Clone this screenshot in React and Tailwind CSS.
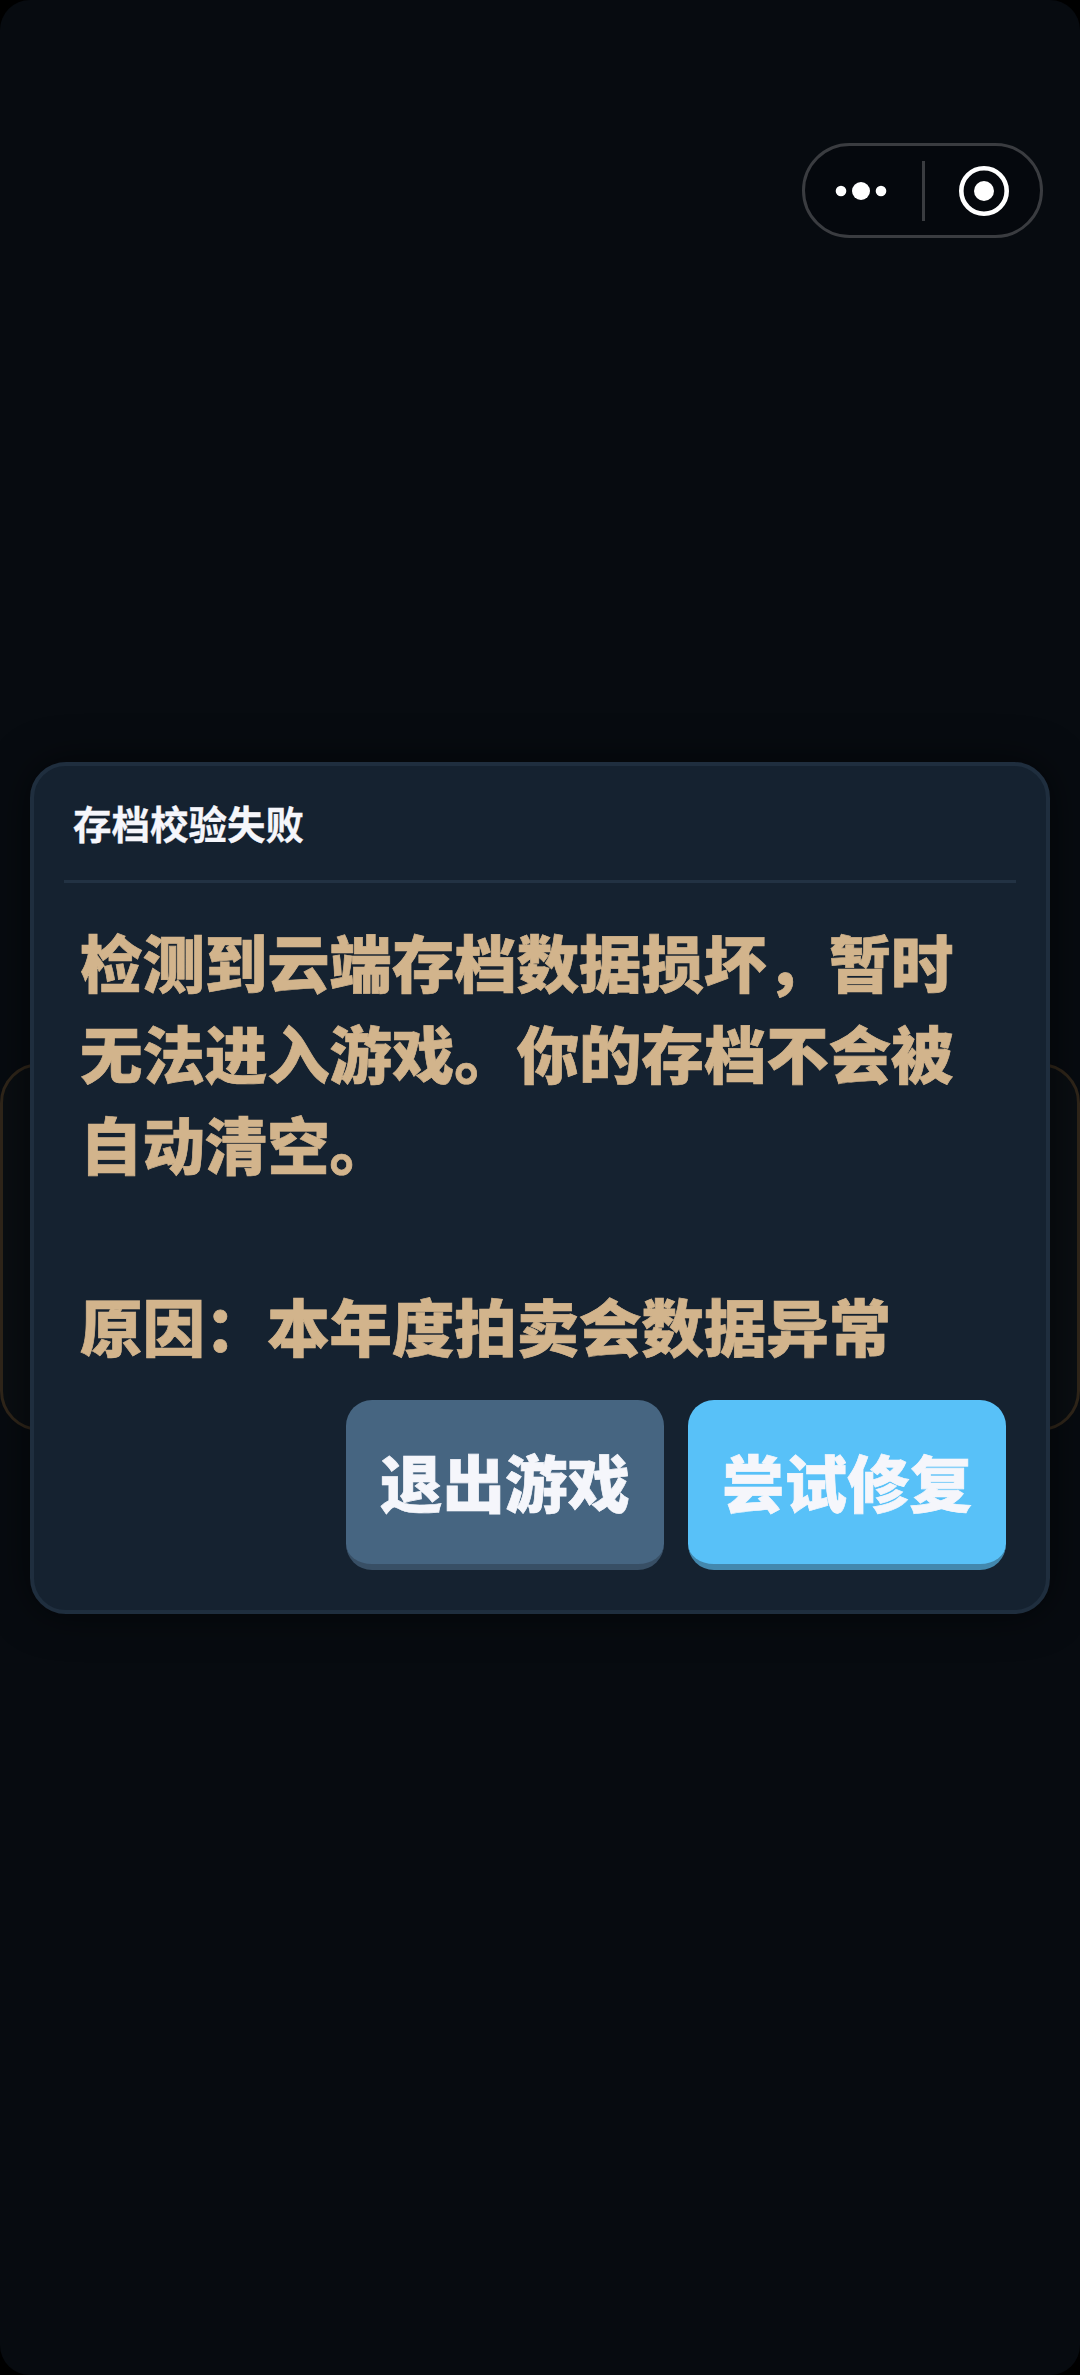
import React from 'react';

const cjk = "font-['Noto_Sans_CJK_SC','Noto_Sans',sans-serif]";

function CapsuleMenu() {
  return (
    <div className="flex items-center w-[241px] h-[95px] rounded-full border-[3px] border-[#3a3c40] bg-[#05080d]">
      <div className="flex items-center justify-center w-[117px] h-full pr-[5px]">
        <svg width="60" height="20" viewBox="0 0 60 20" fill="#fff">
          <circle cx="10" cy="10" r="5.3" />
          <circle cx="30" cy="10" r="9" />
          <circle cx="50" cy="10" r="5.3" />
        </svg>
      </div>
      <div className="w-[3px] h-[60px] bg-[#3a3c40]" />
      <div className="flex items-center justify-center flex-1 h-full pl-[3px]">
        <svg width="52" height="52" viewBox="0 0 52 52" fill="none">
          <circle cx="26" cy="26" r="22.7" stroke="#fff" strokeWidth="4.6" />
          <circle cx="26" cy="26" r="10" fill="#fff" />
        </svg>
      </div>
    </div>
  );
}

function DialogButton({ label, className }) {
  return (
    <button className={`flex items-center justify-center w-[318px] h-[170px] rounded-[26px] border-b-[6px] text-[62.5px] leading-none font-black text-[#f5f6fb] [-webkit-text-stroke:0.7px_#f5f6fb] ${className}`}>
      {label}
    </button>
  );
}

export default function App() {
  return (
    <div className="bg-black w-[1080px] h-[2375px]">
      <div className={`relative w-[1080px] h-[2375px] overflow-hidden rounded-[30px] bg-[#070b10] ${cjk}`}>
        {/* Capsule */}
        <div className="flex justify-end pt-[143px] pr-[37px]">
          <CapsuleMenu />
        </div>

        {/* Dimmed card behind the dialog */}
        <div className="mt-[825px] h-[368px] rounded-[40px] border-[3px] border-[#30261a] bg-[#0a0e12]" />

        {/* Dialog */}
        <div className="absolute inset-0 flex items-center justify-center">
          <div className="w-[1020px] h-[852px] rounded-[36px] border-[4px] border-[#1f2e3e] bg-[#152230] px-[30px] flex flex-col shadow-[0_0_40px_rgba(0,0,0,0.55)]">
            <div className="h-[117px] pl-[9px] pt-[31px] border-b-[3px] border-[#223243]">
              <h2 className="text-[38.5px] leading-[50px] font-bold text-[#f5f6fb] [-webkit-text-stroke:0.3px_#f5f6fb]">存档校验失败</h2>
            </div>
            <p className="pl-[16px] pt-[33px] h-[517px] text-[62.4px] leading-[91px] font-black text-[#d2b48c] [-webkit-text-stroke:0.7px_#d2b48c]">
              检测到云端存档数据损坏，暂时
              <br />
              无法进入游戏。你的存档不会被
              <br />
              自动清空。
              <br />
              <br />
              原因：本年度拍卖会数据异常
            </p>
            <div className="flex justify-end gap-[24px] pr-[10px]">
              <DialogButton label="退出游戏" className="bg-[#466581] border-[#384f65]" />
              <DialogButton label="尝试修复" className="bg-[#58c1f8] border-[#4388ae]" />
            </div>
          </div>
        </div>
      </div>
    </div>
  );
}
